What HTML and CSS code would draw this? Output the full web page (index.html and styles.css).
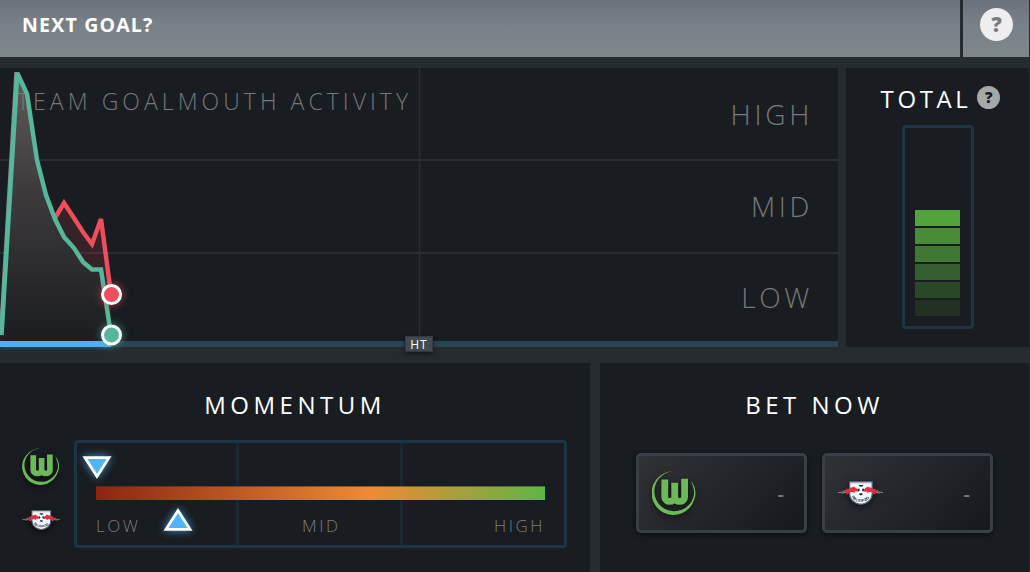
FILE: index.html
```html
<!DOCTYPE html>
<html lang="en">
<head>
<meta charset="utf-8">
<title>Next Goal?</title>
<link rel="stylesheet" href="styles.css">
</head>
<body>
<svg class="defs" width="0" height="0" aria-hidden="true">
  <symbol id="wolfsburg" viewBox="0 0 44 44">
    <path fill="#6cb956" d="M21 .3A21.8 21.8 0 1 0 39.5 10A20 20 0 1 1 21 .3z"/>
    <path fill="#6cb956" d="M38.8 9.600Q45.500 18 42.500 29Q43 18 38.800 9.600z"/>
    <path fill="none" stroke="#6cb956" stroke-width="6.800" d="M12.800 8.500V26.500a4.900 3.800 0 0 0 9.900 0V11.800M22.700 26.500a4.900 3.800 0 0 0 9.900 0V7.700"/>
  </symbol>
</svg>

<header class="header">
  <h1 class="header-title">NEXT GOAL?</h1>
  <div class="header-help"><span class="help help-large">?</span></div>
</header>

<main class="board">
  <section class="row row-top">
    <div class="panel activity">
      <svg class="plot" viewBox="0 0 838 279">
        <defs>
          <linearGradient id="area" x1="0" y1="0" x2="0" y2="1">
            <stop offset="0" stop-color="#625a59"/>
            <stop offset=".45" stop-color="#3d3a3c"/>
            <stop offset="1" stop-color="#1b1d21"/>
          </linearGradient>
        </defs>
        <path class="grid-line" d="M0 92H838M0 185H838M419.500 0V274"/>
        <path fill="url(#area)" d="M1 273L17 4 27 26 37 92 46 127 55 151 64 169 74 180 83 194 92 201.500H101L111 273z"/>
        <path fill="#ed4e5d" fill-opacity=".14" d="M55 149L64 135 74 150 83 164 92 176 101 151 111 226V267L101 201.500H92L83 194 74 180 64 169z"/>
      </svg>
      <h2 class="activity-title">TEAM GOALMOUTH ACTIVITY</h2>
      <div class="levels"><span>HIGH</span><span>MID</span><span>LOW</span></div>
      <div class="timeline"><div class="timeline-fill"></div></div>
      <svg class="plot" viewBox="0 0 838 279">
        <path class="line line-red" d="M55 150L64 135 74 150 83 164 92 176 101 151 111 226"/>
        <path class="line line-shadow" d="M.8 267L16.300 4"/>
        <path class="line line-teal" d="M1.500 267L17.300 5 27 26 37 92 46 127 55 151 64 169 74 180 83 194 92 201.500H101L111 267"/>
        <circle class="dot dot-red" cx="111.500" cy="226.500" r="9"/>
        <circle class="dot dot-teal" cx="111.500" cy="267" r="9"/>
      </svg>
      <span class="half-time">HT</span>
    </div>
    <div class="panel total">
      <div class="total-head"><h2 class="heading heading-tight">TOTAL</h2><span class="help help-small">?</span></div>
      <div class="gauge">
        <i class="cell cell-6"></i><i class="cell cell-5"></i><i class="cell cell-4"></i><i class="cell cell-3"></i><i class="cell cell-2"></i><i class="cell cell-1"></i>
      </div>
    </div>
  </section>

  <section class="row row-bottom">
    <div class="panel momentum">
      <h2 class="heading">MOMENTUM</h2>
      <div class="momentum-body">
        <div class="teams">
          <svg class="crest" width="38" height="37"><use href="#wolfsburg"/></svg>
          <svg class="crest" width="38" height="20" viewBox="0 0 45 24">
            <g id="leipzig">
              <path fill="#f4f5f8" stroke="#56627c" stroke-width="1.300" d="M11.600.800H34.200V12.500C34.200 19 28.500 23.300 22.900 23.300S11.600 19 11.600 12.500z"/>
              <path fill="none" stroke="#b9bfca" stroke-width=".6" d="M13 2.300H32.800"/>
              <circle cx="22.900" cy="9" r="4.800" fill="#fff"/>
              <path fill="#18223f" d="M21.300 4h3.400l.7 1-2.500.8-2.400-.8zM19.300 8l1.800-.6.8 1.700-1.100 1.500-1.500-.6zM26.500 8l-1.800-.6-.8 1.700 1.100 1.500 1.500-.6zM21.700 12.300h2.400l.8 1-2 1.100-2-1.100z"/>
              <g id="bull">
                <path fill="none" stroke="#9a9199" stroke-width=".9" d="M0 11.700L5 10.900 8.500 11.200M3.500 12.200L7.500 11.400M5.500 9.500L8 10.300"/>
                <path fill="#dc3349" d="M5.500 10.500L8.300 9.200 8 7.200 9.800 8.200 12.500 6.700 16 5.700 18.500 7.200 20.300 9.700 19.200 10.800 17.200 10.300 16.200 12 14.500 11 12.200 11 9.800 13.200 7.300 13.200 9.600 11.200 7 11.600z"/>
              </g>
              <use href="#bull" transform="matrix(-1 0 0 1 45.600 0)"/>
              <path id="crest-arc" fill="none" d="M13 14.500Q15.500 20.700 23 20.700T33 14.500"/>
              <text class="crest-text"><textPath href="#crest-arc" startOffset="1.200" textLength="21">RB LEIPZIG</textPath></text>
            </g>
          </svg>
        </div>
        <div class="meter">
          <div class="meter-grid"><i></i><i></i><i></i></div>
          <div class="meter-bar"></div>
          <div class="meter-labels"><span>LOW</span><span>MID</span><span>HIGH</span></div>
          <svg class="marker marker-down" viewBox="0 0 30 23"><path d="M3 1.700H27L15 20.500z"/></svg>
          <svg class="marker marker-up" viewBox="0 0 30 23"><path d="M3 21.300H27L15 2.500z"/></svg>
        </div>
      </div>
    </div>
    <div class="panel bet">
      <h2 class="heading">BET NOW</h2>
      <div class="bets">
        <button class="bet-button"><svg class="crest" width="44" height="44"><use href="#wolfsburg"/></svg><span>-</span></button>
        <button class="bet-button"><svg class="crest" width="45" height="24" viewBox="0 0 45 24"><use href="#leipzig"/></svg><span>-</span></button>
      </div>
    </div>
  </section>
</main>
</body>
</html>
```
FILE: styles.css
```css
* { box-sizing: border-box; }
body {
  margin: 0;
  width: 1030px;
  height: 572px;
  overflow: hidden;
  background: #262b30;
  color: #fff;
  font-family: "Open Sans", "Noto Sans", sans-serif;
}
h1, h2 { margin: 0; }
.defs { position: absolute; }

.header {
  display: flex;
  width: 1029px;
  height: 57px;
  gap: 3px;
}
.header-title, .header-help {
  display: flex;
  align-items: center;
  background: linear-gradient(#6b727c, #798188 45%, #7e878c);
}
.header-title {
  flex: 1;
  padding: 0 0 8px 22px;
  font-size: 19.5px;
  font-weight: 700;
  letter-spacing: 1.2px;
}
.header-help { width: 66px; justify-content: center; padding: 0 0 8px 1px; }

.help {
  display: grid;
  place-items: center;
  border-radius: 50%;
  font-weight: 800;
  line-height: 1;
}
.help-large { width: 33px; height: 33px; background: #eee; color: #757d83; font-size: 21px; }
.help-small { width: 23px; height: 23px; background: #a4a8a8; color: #191b20; font-size: 15px; }

.board { display: flex; flex-direction: column; gap: 16px; padding-top: 11px; width: 1029px; }
.row { display: flex; }
.row-top { height: 279px; gap: 8px; }
.row-bottom { height: 209px; gap: 10px; }
.panel { background: #191c20; }
.heading { font-size: 24px; font-weight: 400; line-height: 32px; letter-spacing: 4.5px; }
.heading-tight { letter-spacing: 3.6px; }

.activity {
  position: relative;
  display: flex;
  flex-direction: column;
  width: 838px;
}
.plot { position: absolute; inset: 0; width: 838px; height: 279px; overflow: visible; }
.grid-line { fill: none; stroke: #292c31; stroke-width: 1.8; }
.activity-title {
  position: absolute;
  top: 17px;
  left: 17px;
  color: #75777a;
  font-size: 23px;
  font-weight: 300;
  line-height: 32px;
  letter-spacing: 4.05px;
  white-space: nowrap;
}
.levels {
  display: grid;
  grid-template-rows: 91px 93px 89px;
  justify-items: end;
  align-items: center;
  padding-right: 25px;
  color: #77797c;
  font-size: 28px;
  font-weight: 300;
  letter-spacing: 3.7px;
}
.timeline { height: 6px; background: #284453; }
.timeline-fill { width: 111px; height: 6px; background: #4cb1f4; box-shadow: 0 0 5px rgba(76, 177, 244, .45); }
.line { fill: none; stroke-width: 4.5; stroke-linejoin: miter; }
.line-red { stroke: #ee4d5e; }
.line-teal { stroke: #56b79c; }
.line-shadow { stroke: #8a8583; stroke-width: 4; }
.dot { stroke: #fff; stroke-width: 3; }
.dot-red { fill: #ee4d5e; filter: drop-shadow(0 0 4px rgba(238, 77, 94, .7)); }
.dot-teal { fill: #56b79c; filter: drop-shadow(0 0 4px rgba(86, 183, 156, .7)); }
.half-time {
  position: absolute;
  left: 405px;
  top: 268px;
  width: 28px;
  height: 16px;
  background: #424a4f;
  border: 1px solid #33393e;
  box-shadow: 0 2px 5px rgba(0, 0, 0, .5);
  font-size: 12px;
  line-height: 15px;
  letter-spacing: 1px;
  text-align: center;
}

.total { display: flex; flex-direction: column; align-items: center; width: 183px; padding-top: 15px; }
.total-head { display: flex; align-items: center; gap: 6px; height: 32px; padding-left: 6px; }
.total-head .help { margin-bottom: 4px; }
.gauge {
  display: flex;
  flex-direction: column;
  justify-content: flex-end;
  gap: 2px;
  width: 72px;
  height: 204px;
  margin-top: 10px;
  padding: 0 10px 10px;
  border: 3px solid #1d3444;
  border-radius: 4px;
}
.cell { height: 16px; width: 45px; }
.cell-6 { background: #52a33b; }
.cell-5 { background: #498c37; }
.cell-4 { background: #407733; }
.cell-3 { background: #355f2e; }
.cell-2 { background: #2b472a; }
.cell-1 { background: #233125; }

.momentum, .bet { display: flex; flex-direction: column; align-items: center; padding-top: 26px; }
.momentum { width: 590px; }
.bet { width: 429px; }
.momentum-body { display: flex; align-self: stretch; gap: 14px; margin-top: 19px; padding-left: 22px; }
.teams { display: flex; flex-direction: column; gap: 25px; width: 38px; padding-top: 8px; }
.crest { display: block; filter: drop-shadow(0 2px 3px rgba(0, 0, 0, .6)); }
.crest-text { fill: #25304e; font: 700 3.8px "Liberation Sans", sans-serif; }
.meter {
  position: relative;
  width: 493px;
  height: 108px;
  padding: 43px 19px 0;
  border: 3px solid #1d3444;
  border-radius: 4px;
}
.meter-grid { position: absolute; inset: 0; display: grid; grid-template-columns: 159px 164px 1fr; }
.meter-grid i + i { border-left: 3px solid #1a2731; }
.meter-bar {
  position: relative;
  width: 449px;
  height: 14px;
  border-top: 1px solid rgba(50, 40, 30, .5);
  background: linear-gradient(90deg, #8b2512, #f08a33 61%, #60b545);
}
.meter-labels {
  position: relative;
  display: grid;
  grid-template-columns: 206px 1fr auto;
  width: 449px;
  margin-top: 14px;
  color: #797b7e;
  font-size: 17px;
  font-weight: 300;
  line-height: 24px;
  letter-spacing: 2.5px;
}
.marker { position: absolute; width: 30px; height: 23px; overflow: visible; filter: drop-shadow(0 0 4px rgba(76, 177, 244, .8)); }
.marker path { fill: #4fb5f7; stroke: #fff; stroke-width: 2.800; }
.marker-down { left: 4.5px; top: 13px; }
.marker-up { left: 85.5px; top: 65px; }

.bets { display: flex; gap: 15px; margin-top: 32px; }
.bet-button {
  display: flex;
  align-items: center;
  justify-content: space-between;
  width: 171px;
  height: 80px;
  padding: 0 20px 0 13px;
  border: 3px solid #383f47;
  border-radius: 5px;
  background: linear-gradient(135deg, #303236, #16181d);
  box-shadow: 0 2px 5px rgba(0, 0, 0, .5);
  color: #76787b;
  font: 600 20px "Open Sans", sans-serif;
}
```
